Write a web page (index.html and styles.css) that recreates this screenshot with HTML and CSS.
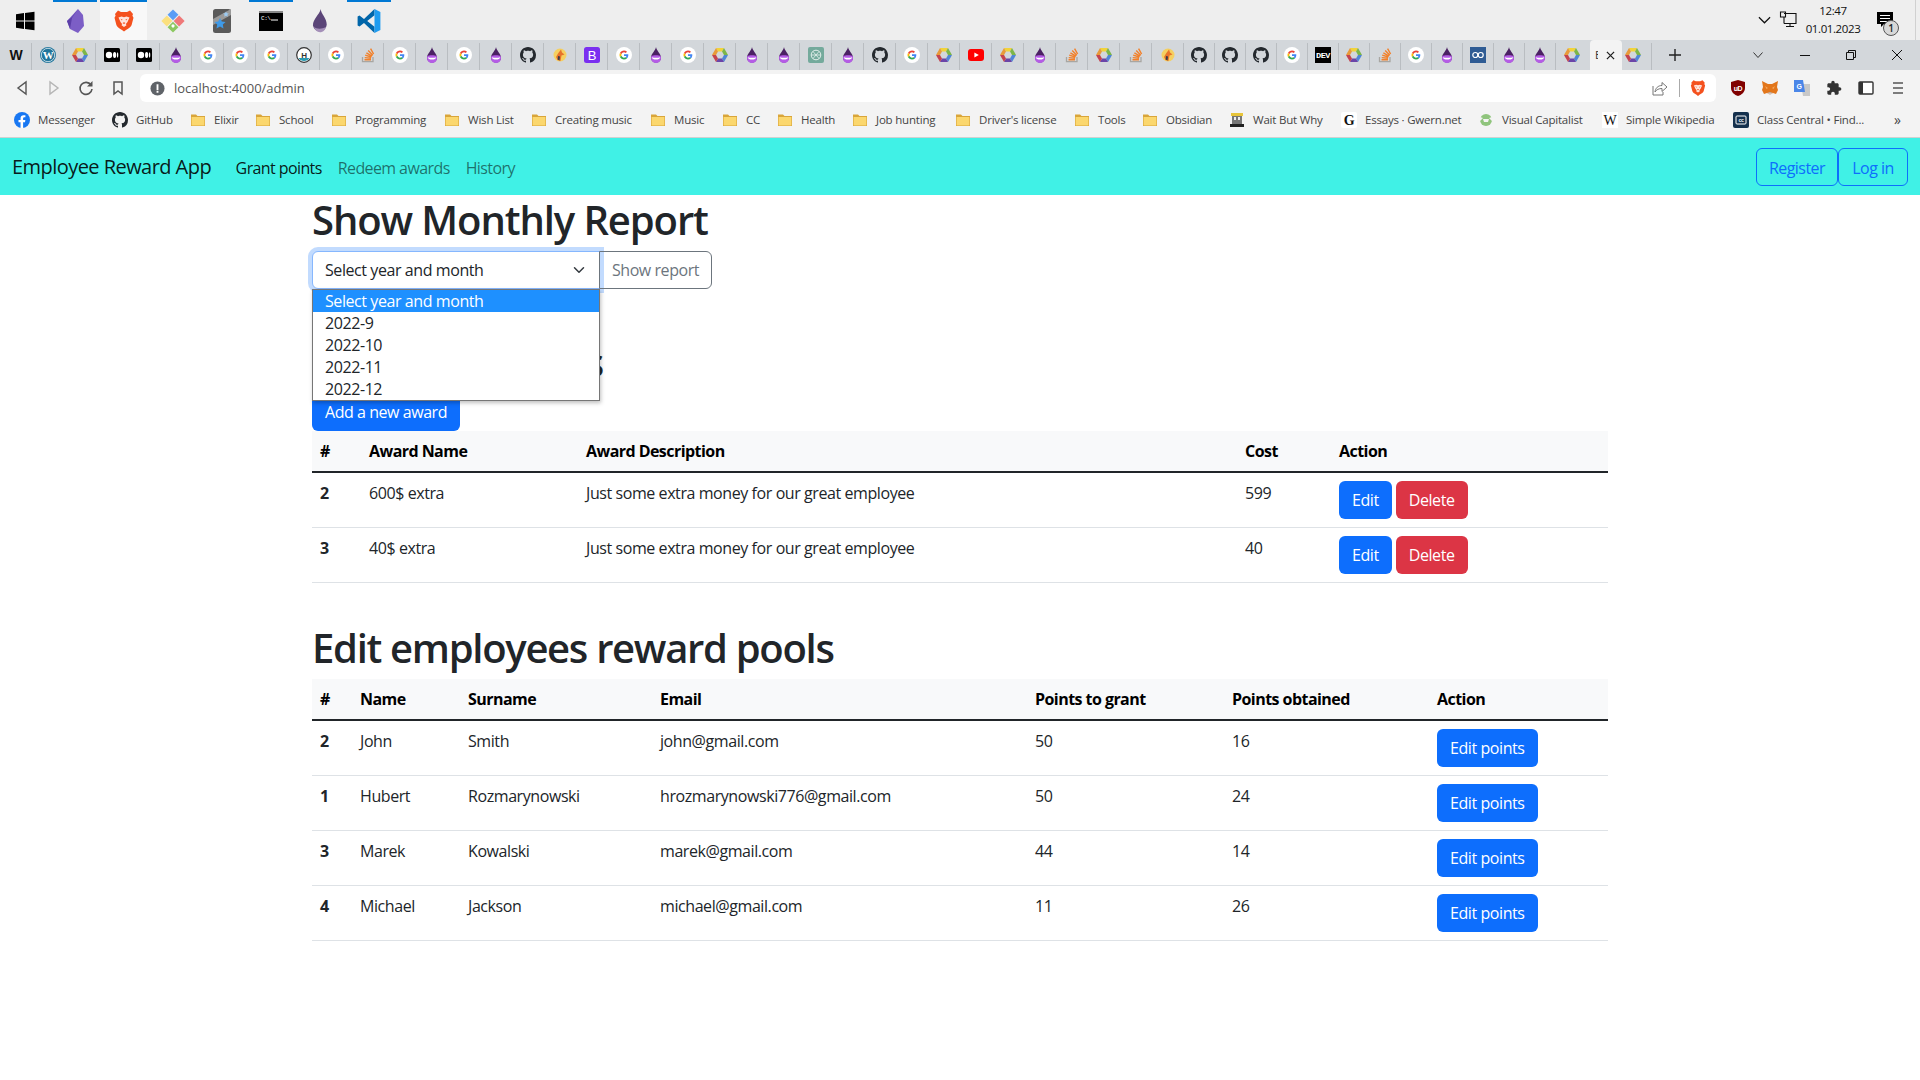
FILE: index.html
```html
<!DOCTYPE html>
<html lang="en">
<head>
  <meta charset="UTF-8">
  <title>Employee Reward App</title>
  <link rel="stylesheet" href="styles.css">
</head>
<body>
  <svg class="sprites" width="0" height="0">
    <symbol id="g" viewBox="0 0 64 64">
      <circle cx="32" cy="32" r="32" fill="#fff"/>
      <g transform="translate(14 14) scale(.75)">
        <path fill="#EA4335" d="M24 9.5c3.54 0 6.71 1.22 9.21 3.6l6.85-6.85C35.9 2.38 30.47 0 24 0 14.62 0 6.51 5.38 2.56 13.22l7.98 6.19C12.43 13.72 17.74 9.5 24 9.5z"/>
        <path fill="#4285F4" d="M46.98 24.55c0-1.57-.15-3.09-.38-4.55H24v9.02h12.94c-.58 2.96-2.26 5.48-4.78 7.18l7.73 6c4.51-4.18 7.09-10.36 7.09-17.65z"/>
        <path fill="#FBBC05" d="M10.53 28.59c-.48-1.45-.76-2.99-.76-4.59s.27-3.14.76-4.59l-7.98-6.19C.92 16.46 0 20.12 0 24c0 3.88.92 7.54 2.56 10.78l7.97-6.19z"/>
        <path fill="#34A853" d="M24 48c6.48 0 11.93-2.13 15.89-5.81l-7.73-6c-2.15 1.45-4.92 2.3-8.16 2.3-6.26 0-11.57-4.22-13.47-9.91l-7.98 6.19C6.51 42.62 14.62 48 24 48z"/>
      </g>
    </symbol>
    <symbol id="hex" viewBox="0 0 16 16">
      <polygon fill="#f2d33a" points="4,1.100 12,1.100 10,4.500 6,4.500"/>
      <polygon fill="#7cb648" points="12,1.100 16,8 12,8 10,4.500"/>
      <polygon fill="#4f86d6" points="16,8 12,14.900 10,11.500 12,8"/>
      <polygon fill="#6b45a8" points="12,14.900 4,14.900 6,11.500 10,11.500"/>
      <polygon fill="#c4434f" points="4,14.900 0,8 4,8 6,11.500"/>
      <polygon fill="#e89a3a" points="0,8 4,1.100 6,4.500 4,8"/>
    </symbol>
    <symbol id="drop" viewBox="0 0 16 16">
      <path fill="#4b2163" d="M8 0c.3 3.500 5 6.600 5 10.800A5 5 0 0 1 3 10.800C3 6.600 7.700 3.500 8 0z"/>
      <path fill="#b55ce6" d="M3.300 9.300a5 5 0 1 0 9.400 0C11 8 5 8 3.300 9.300z"/>
      <path fill="#fff" d="M3.800 10.200c2.400.8 6 .8 8.400 0-.2 1.700-1.900 2.400-4.200 2.400s-4-.7-4.200-2.400z"/>
    </symbol>
    <symbol id="medium" viewBox="0 0 16 16">
      <rect y="1" width="16" height="14" rx="1.500" fill="#000"/>
      <circle cx="5" cy="8" r="3.200" fill="#fff"/>
      <ellipse cx="10.600" cy="8" rx="1.600" ry="3" fill="#fff"/>
      <ellipse cx="13.600" cy="8" rx=".7" ry="2.800" fill="#fff"/>
    </symbol>
    <symbol id="github" viewBox="0 0 16 16">
      <path fill="#24292e" d="M8 0C3.580 0 0 3.580 0 8c0 3.540 2.290 6.530 5.470 7.590.4.07.55-.17.55-.38 0-.19-.01-.82-.01-1.490-2.010.37-2.530-.49-2.690-.94-.09-.23-.48-.94-.82-1.130-.28-.15-.68-.52-.01-.53.63-.01 1.080.58 1.230.82.72 1.210 1.870.87 2.330.66.07-.52.28-.87.51-1.070-1.780-.2-3.640-.89-3.640-3.950 0-.87.31-1.590.82-2.150-.08-.2-.36-1.020.08-2.120 0 0 .67-.21 2.200.82.64-.18 1.320-.27 2-.27.68 0 1.360.09 2 .27 1.530-1.040 2.200-.82 2.200-.82.44 1.100.16 1.920.08 2.120.51.56.82 1.270.82 2.150 0 3.070-1.870 3.750-3.650 3.950.29.25.54.73.54 1.480 0 1.070-.01 1.930-.01 2.200 0 .21.15.46.55.38A8.013 8.013 0 0 0 16 8c0-4.420-3.580-8-8-8z"/>
    </symbol>
    <symbol id="so" viewBox="0 0 16 16">
      <path fill="none" stroke="#a8a6a2" stroke-width="1.300" d="M2.500 10v4.600h10.500V10"/>
      <path fill="none" stroke="#f2802a" stroke-width="1.400" d="M4.500 12.800h6.500M4.700 10.600l6.300.7M5.200 8.200l6.200 1.800M6.400 5.800l5.600 3.300M8.200 3.600l4.600 4.600M10.600 1.600l3 5.400"/>
    </symbol>
    <symbol id="fox" viewBox="0 0 16 16">
      <circle cx="8" cy="8" r="6.500" fill="#f5d060"/>
      <path fill="#e8742a" d="M9 2.500l1 3 2.500 2-3 1-1 5.500-3-1-1.500-3 2-3.500z"/>
      <path fill="#3a3a48" d="M6 9l2 .5-.5 4-1.800-1z"/>
    </symbol>
    <symbol id="wp" viewBox="0 0 16 16">
      <circle cx="8" cy="8" r="8" fill="#21759b"/>
      <circle cx="8" cy="8" r="6.700" fill="none" stroke="#fff" stroke-width=".7"/>
      <text x="8" y="11.800" text-anchor="middle" font-family="Liberation Serif" font-weight="700" font-size="11" fill="#fff">W</text>
    </symbol>
    <symbol id="hdocs" viewBox="0 0 16 16">
      <circle cx="8" cy="8" r="7.300" fill="#fff" stroke="#333" stroke-width="1.200"/>
      <path fill="#2a9ab0" d="M2.500 11h11a6.500 6.500 0 0 1-11 0z"/>
      <text x="8" y="10.500" text-anchor="middle" font-family="Liberation Sans" font-weight="700" font-size="8" fill="#333">H</text>
    </symbol>
    <symbol id="boot" viewBox="0 0 16 16">
      <rect width="16" height="16" rx="2.500" fill="#7a2ff0"/>
      <text x="8" y="12.500" text-anchor="middle" font-family="Liberation Sans" font-size="13" fill="#fff">B</text>
    </symbol>
    <symbol id="gpt" viewBox="0 0 16 16">
      <rect width="16" height="16" rx="2" fill="#74aa9c"/>
      <circle cx="8" cy="8" r="4.800" fill="none" stroke="#e4f0ec" stroke-width="1"/>
      <path fill="none" stroke="#e4f0ec" stroke-width=".8" d="M5 4.500l6 7M11 4.500l-6 7M3.500 8h9"/>
    </symbol>
    <symbol id="yt" viewBox="0 0 16 16">
      <rect y="2" width="16" height="12" rx="3" fill="#f00"/>
      <path fill="#fff" d="M6.400 5.400L10.800 8l-4.400 2.600z"/>
    </symbol>
    <symbol id="dev" viewBox="0 0 16 16">
      <rect width="16" height="16" fill="#000"/>
      <text x="8" y="11" text-anchor="middle" font-family="Liberation Mono" font-weight="700" font-size="7.500" textLength="14" lengthAdjust="spacingAndGlyphs" fill="#fff">DEV</text>
    </symbol>
    <symbol id="co" viewBox="0 0 16 16">
      <rect width="16" height="16" fill="#2f5c94"/>
      <circle cx="5.300" cy="8" r="2.500" fill="none" stroke="#fff" stroke-width="1.200"/>
      <circle cx="10.700" cy="8" r="2.500" fill="none" stroke="#fff" stroke-width="1.200"/>
    </symbol>
    <symbol id="wmark" viewBox="0 0 16 16">
      <text x="8" y="12.500" text-anchor="middle" font-family="Liberation Sans" font-weight="700" font-size="14" fill="#111">W</text>
    </symbol>
    <symbol id="folder" viewBox="0 0 16 16">
      <path fill="#d9a53a" d="M1 2.500h5l1.500 1.500H15v10H1z"/>
      <path fill="#fbd76e" d="M1.600 5h12.800v8.500H1.600z"/>
    </symbol>
    <symbol id="fb" viewBox="0 0 16 16">
      <circle cx="8" cy="8" r="8" fill="#1877f2"/>
      <path fill="#fff" d="M11 10.300l.35-2.300H9.100V6.500c0-.63.31-1.250 1.300-1.250h1V3.300S10.500 3.150 9.600 3.150C7.750 3.150 6.550 4.270 6.550 6.300V8H4.500v2.300h2.050V16h2.550v-5.700z"/>
    </symbol>
    <symbol id="brave" viewBox="0 0 24 24">
      <path fill="#f4511e" d="M6 1.500L9 3h6l3-1.500 3 3.500-.6 1.700 1.100 2L19.600 16c-.5 2-2.600 3-5.600 5l-2 1.500L10 21c-3-2-5.100-3-5.600-5L2.500 8.700l1.100-2L3 5z"/>
      <path fill="#fff" d="M6.500 8.500L9.500 7.600l2.500.7 2.500-.7 3 .9-2 4.500-1.600 2 .6 1.200-2.500 1.800-2.500-1.800.6-1.200-1.600-2z" opacity=".85"/>
      <path fill="#f4511e" d="M8.500 9.800l2 .8-.6 1zM15.500 9.800l-2 .8.6 1zM10.500 14l1.500-.8 1.500.8-1.500.9z"/>
    </symbol>
    <symbol id="tray-net" viewBox="0 0 18 18">
      <path fill="none" stroke="#111" stroke-width="1.100" d="M5 2.500h12v10H5M1.500 1h5v5h-5zM5 6v6.500M11 12.500v3M7 15.500h8"/>
    </symbol>
  </svg>

  <div class="taskbar">
    <div class="task-item task-start">
      <svg class="task-icon" viewBox="0 0 24 24"><path fill="#000" d="M3 5.200l8-1.100v7.400H3zM12 4l9.500-1.300v8.800H12zM3 12.500h8v7.400l-8-1.100zM12 12.500h9.500v8.800L12 20z"/></svg>
    </div>
    <div class="task-item task-open">
      <svg class="task-icon" viewBox="0 0 24 24"><path fill="#7c5ec6" d="M15 0l5 6 1 11-6 7-8-4-3-8z"/><path fill="#5c3fa8" d="M15 0L9 8l-5 4 3 8 2-11z"/></svg>
    </div>
    <div class="task-item task-active">
      <svg class="task-icon"><use href="#brave"/></svg>
    </div>
    <div class="task-item">
      <svg class="task-icon" viewBox="0 0 24 24">
        <g transform="rotate(45 12 12)">
          <rect x="3.800" y="3.800" width="7.700" height="7.700" fill="#5a9cf5"/>
          <rect x="12.500" y="3.800" width="7.700" height="7.700" fill="#ef7878"/>
          <rect x="12.500" y="12.500" width="7.700" height="7.700" fill="#8cc860"/>
          <rect x="3.800" y="12.500" width="7.700" height="7.700" fill="#fbe07e"/>
          <circle cx="15.500" cy="15.500" r="1.600" fill="#fff"/>
        </g>
      </svg>
    </div>
    <div class="task-item">
      <svg class="task-icon" viewBox="0 0 24 24">
        <rect x="3" y="0" width="18" height="24" rx="2.500" fill="#5a5a5a"/>
        <path fill="#9a9a9a" d="M3 10L21 0v6L3 16z"/>
        <path fill="#3f9ae8" d="M10 9l1.800 3.500 3.800.5-2.800 2.600.7 3.800L10 17.600l-3.500 1.800.7-3.800L4.400 13l3.800-.5z"/>
        <path fill="#9ccbf2" d="M16 2.500l.9 1.700 1.900.3-1.400 1.300.3 1.900-1.700-.9-1.700.9.3-1.900-1.400-1.300 1.900-.3z"/>
      </svg>
    </div>
    <div class="task-item task-open">
      <svg class="task-icon" viewBox="0 0 24 24">
        <rect y="2" width="24" height="20" fill="#000"/>
        <rect y="2" width="24" height="2" fill="#888"/>
        <text x="2" y="11" font-family="Liberation Mono" font-size="6" fill="#fff">C:\</text>
        <path stroke="#fff" d="M12 11h7"/>
      </svg>
    </div>
    <div class="task-item">
      <svg class="task-icon" viewBox="0 0 16 16"><path fill="#5b4578" d="M8.500 0c0 3 4 6 4 10.500A4.700 5 0 0 1 3.300 11C3.300 6.500 7.500 4 8.500 0z"/><path fill="#a48fb8" d="M4 12c2 1.500 5 1.500 8 0-.5 2-2 3.500-4 3.500S4.500 14 4 12z"/></svg>
    </div>
    <div class="task-item task-open">
      <svg class="task-icon" viewBox="0 0 24 24">
        <path fill="#0065a9" d="M17.500 0L7 10 2.500 6.500.6 7.600v8.800l1.900 1.100L7 14l10.500 10v-6.200L10.200 12l7.300-5.800z"/>
        <path fill="#1f9cf0" d="M17.500 0L23.400 2.900v18.200L17.500 24z"/>
      </svg>
    </div>
    <div class="tray">
      <svg class="tray-chevron" viewBox="0 0 14 8"><path fill="none" stroke="#111" stroke-width="1.300" d="M1 1l6 6 6-6"/></svg>
      <svg class="tray-net"><use href="#tray-net"/></svg>
      <div class="clock"><span>12:47</span><span>01.01.2023</span></div>
      <div class="notify">
        <svg class="notify-icon" viewBox="0 0 16 16"><path fill="#000" d="M0 0h16v12H7l-3 3v-3H0z"/><path stroke="#fff" d="M3 3.500h10M3 6.500h10M3 9.500h7"/></svg>
        <span class="notify-badge">1</span>
      </div>
    </div>
  </div>

  <div class="tabstrip">
    <span class="tab"><svg class="fav"><use href="#wmark"/></svg></span>
    <span class="tab"><svg class="fav"><use href="#wp"/></svg></span>
    <span class="tab"><svg class="fav"><use href="#hex"/></svg></span>
    <span class="tab"><svg class="fav"><use href="#medium"/></svg></span>
    <span class="tab"><svg class="fav"><use href="#medium"/></svg></span>
    <span class="tab"><svg class="fav"><use href="#drop"/></svg></span>
    <span class="tab"><svg class="fav"><use href="#g"/></svg></span>
    <span class="tab"><svg class="fav"><use href="#g"/></svg></span>
    <span class="tab"><svg class="fav"><use href="#g"/></svg></span>
    <span class="tab"><svg class="fav"><use href="#hdocs"/></svg></span>
    <span class="tab"><svg class="fav"><use href="#g"/></svg></span>
    <span class="tab"><svg class="fav"><use href="#so"/></svg></span>
    <span class="tab"><svg class="fav"><use href="#g"/></svg></span>
    <span class="tab"><svg class="fav"><use href="#drop"/></svg></span>
    <span class="tab"><svg class="fav"><use href="#g"/></svg></span>
    <span class="tab"><svg class="fav"><use href="#drop"/></svg></span>
    <span class="tab"><svg class="fav"><use href="#github"/></svg></span>
    <span class="tab"><svg class="fav"><use href="#fox"/></svg></span>
    <span class="tab"><svg class="fav"><use href="#boot"/></svg></span>
    <span class="tab"><svg class="fav"><use href="#g"/></svg></span>
    <span class="tab"><svg class="fav"><use href="#drop"/></svg></span>
    <span class="tab"><svg class="fav"><use href="#g"/></svg></span>
    <span class="tab"><svg class="fav"><use href="#hex"/></svg></span>
    <span class="tab"><svg class="fav"><use href="#drop"/></svg></span>
    <span class="tab"><svg class="fav"><use href="#drop"/></svg></span>
    <span class="tab"><svg class="fav"><use href="#gpt"/></svg></span>
    <span class="tab"><svg class="fav"><use href="#drop"/></svg></span>
    <span class="tab"><svg class="fav"><use href="#github"/></svg></span>
    <span class="tab"><svg class="fav"><use href="#g"/></svg></span>
    <span class="tab"><svg class="fav"><use href="#hex"/></svg></span>
    <span class="tab"><svg class="fav"><use href="#yt"/></svg></span>
    <span class="tab"><svg class="fav"><use href="#hex"/></svg></span>
    <span class="tab"><svg class="fav"><use href="#drop"/></svg></span>
    <span class="tab"><svg class="fav"><use href="#so"/></svg></span>
    <span class="tab"><svg class="fav"><use href="#hex"/></svg></span>
    <span class="tab"><svg class="fav"><use href="#so"/></svg></span>
    <span class="tab"><svg class="fav"><use href="#fox"/></svg></span>
    <span class="tab tab-narrow"><svg class="fav"><use href="#github"/></svg></span>
    <span class="tab tab-narrow"><svg class="fav"><use href="#github"/></svg></span>
    <span class="tab tab-narrow"><svg class="fav"><use href="#github"/></svg></span>
    <span class="tab tab-narrow"><svg class="fav"><use href="#g"/></svg></span>
    <span class="tab tab-narrow"><svg class="fav"><use href="#dev"/></svg></span>
    <span class="tab tab-narrow"><svg class="fav"><use href="#hex"/></svg></span>
    <span class="tab tab-narrow"><svg class="fav"><use href="#so"/></svg></span>
    <span class="tab tab-narrow"><svg class="fav"><use href="#g"/></svg></span>
    <span class="tab tab-narrow"><svg class="fav"><use href="#drop"/></svg></span>
    <span class="tab tab-narrow"><svg class="fav"><use href="#co"/></svg></span>
    <span class="tab tab-narrow"><svg class="fav"><use href="#drop"/></svg></span>
    <span class="tab tab-narrow"><svg class="fav"><use href="#drop"/></svg></span>
    <span class="tab tab-narrow tab-before-active"><svg class="fav"><use href="#hex"/></svg></span>
    <span class="tab-current">
      <span class="tab-letter">E</span>
      <svg class="tab-close" viewBox="0 0 10 10"><path stroke="#222" stroke-width="1.400" d="M1 1l8 8M9 1l-8 8"/></svg>
    </span>
    <span class="tab tab-last"><svg class="fav"><use href="#hex"/></svg></span>
    <svg class="tab-new" viewBox="0 0 12 12"><path stroke="#222" stroke-width="1.400" d="M6 0v12M0 6h12"/></svg>
    <div class="window-controls">
      <svg class="win-chevron" viewBox="0 0 10 6"><path fill="none" stroke="#333" d="M.5.500L5 5.500 9.500.500"/></svg>
      <svg class="win-btn" viewBox="0 0 10 10"><path stroke="#111" d="M0 5.500h10"/></svg>
      <svg class="win-btn" viewBox="0 0 10 10"><path fill="none" stroke="#111" d="M.5 2.500h7v7h-7zM2.500 2.500v-2h7v7h-2"/></svg>
      <svg class="win-btn" viewBox="0 0 10 10"><path stroke="#111" d="M0 0l10 10M10 0L0 10"/></svg>
    </div>
  </div>

  <div class="toolbar">
    <div class="nav-icons">
      <svg class="tool-icon" viewBox="0 0 16 16"><path fill="none" stroke="#555" stroke-width="1.400" d="M12 2v12L4 8z"/></svg>
      <svg class="tool-icon" viewBox="0 0 16 16"><path fill="none" stroke="#b5b5b5" stroke-width="1.400" d="M4 2v12l8-6z"/></svg>
      <svg class="tool-icon" viewBox="0 0 16 16"><path fill="none" stroke="#555" stroke-width="1.600" d="M13 5a6 6 0 1 0 1 4"/><path fill="#555" d="M14.500 1v5.500H9z"/></svg>
      <svg class="tool-icon" viewBox="0 0 16 16"><path fill="none" stroke="#555" stroke-width="1.500" d="M4 2h8v12l-4-3-4 3z"/></svg>
    </div>
    <div class="address">
      <svg class="info-icon" viewBox="0 0 16 16"><circle cx="8" cy="8" r="7.500" fill="#5f6368"/><path fill="#fff" d="M7 3.500h2v6H7zM7 10.500h2v2H7z"/></svg>
      <span class="url">localhost:4000/admin</span>
      <svg class="share-icon" viewBox="0 0 16 16"><path fill="none" stroke="#777" d="M1 6v9h10v-3M3 12c.5-4 3-6.500 7-6.500V2.500l5 4.500-5 4.500V8.500c-3 0-5.500 1-7 3.500z"/></svg>
      <span class="address-sep"></span>
      <svg class="brave-icon"><use href="#brave"/></svg>
    </div>
    <div class="extensions">
      <svg class="ext-icon" viewBox="0 0 16 16"><path fill="#800000" d="M8 0l7 2v6c0 4-3.500 7-7 8-3.500-1-7-4-7-8V2z"/><text x="8" y="10.500" text-anchor="middle" font-family="Liberation Sans" font-weight="700" font-size="7" fill="#fff">uD</text></svg>
      <svg class="ext-icon" viewBox="0 0 16 16"><path fill="#e2761b" d="M0 1l6 3h4l6-3-1 6 1 3-2 4-3-1-3 1-3-1-3 1-2-4 1-3z"/><path fill="#f6a65a" d="M3 6l3 2-1.500 1zM13 6l-3 2 1.500 1z"/><path fill="#3b2314" d="M6.500 12h3L8 14z"/><path fill="#d7c1b3" d="M5 13l3 2 3-2-3-1z"/></svg>
      <svg class="ext-icon" viewBox="0 0 16 16"><path fill="#c8c8c8" d="M7 4h9v12H9z"/><path fill="#4a86e8" d="M0 0h9l2 12H0z"/><text x="5" y="9" text-anchor="middle" font-family="Liberation Sans" font-weight="700" font-size="7" fill="#fff">G</text></svg>
      <svg class="ext-icon" viewBox="0 0 24 24"><path fill="#333" d="M20.500 11H19V7c0-1.100-.9-2-2-2h-4V3.500C13 2.120 11.880 1 10.500 1S8 2.120 8 3.500V5H4c-1.100 0-1.990.9-1.990 2v3.800H3.500c1.490 0 2.700 1.210 2.700 2.700s-1.210 2.700-2.700 2.700H2V20c0 1.100.9 2 2 2h3.800v-1.500c0-1.490 1.210-2.700 2.700-2.700 1.490 0 2.700 1.210 2.700 2.700V22H17c1.100 0 2-.9 2-2v-4h1.500c1.380 0 2.500-1.120 2.500-2.500S21.880 11 20.500 11z"/></svg>
      <svg class="ext-icon" viewBox="0 0 16 16"><rect x="1" y="2" width="14" height="12" rx="1" fill="#fff" stroke="#333" stroke-width="1.400"/><rect x="1" y="2" width="4" height="12" fill="#333"/></svg>
      <svg class="ext-icon" viewBox="0 0 16 16"><path stroke="#555" stroke-width="1.600" d="M3 3h10M3 8h10M3 13h10"/></svg>
    </div>
  </div>

  <div class="bookmarks">
    <a class="bookmark"><svg class="fav"><use href="#fb"/></svg>Messenger</a>
    <a class="bookmark"><svg class="fav"><use href="#github"/></svg>GitHub</a>
    <a class="bookmark"><svg class="fav"><use href="#folder"/></svg>Elixir</a>
    <a class="bookmark"><svg class="fav"><use href="#folder"/></svg>School</a>
    <a class="bookmark"><svg class="fav"><use href="#folder"/></svg>Programming</a>
    <a class="bookmark"><svg class="fav"><use href="#folder"/></svg>Wish List</a>
    <a class="bookmark"><svg class="fav"><use href="#folder"/></svg>Creating music</a>
    <a class="bookmark"><svg class="fav"><use href="#folder"/></svg>Music</a>
    <a class="bookmark"><svg class="fav"><use href="#folder"/></svg>CC</a>
    <a class="bookmark"><svg class="fav"><use href="#folder"/></svg>Health</a>
    <a class="bookmark"><svg class="fav"><use href="#folder"/></svg>Job hunting</a>
    <a class="bookmark"><svg class="fav"><use href="#folder"/></svg>Driver's license</a>
    <a class="bookmark"><svg class="fav"><use href="#folder"/></svg>Tools</a>
    <a class="bookmark"><svg class="fav"><use href="#folder"/></svg>Obsidian</a>
    <a class="bookmark"><svg class="fav" viewBox="0 0 16 16"><rect x="2" y="1" width="12" height="3" fill="#e8c53a"/><rect x="3" y="4" width="10" height="8" fill="#777"/><path fill="#eee" d="M5 5h2v3H5zM9 5h2v3H9z"/><rect x="1" y="12" width="14" height="3" fill="#222"/></svg>Wait But Why</a>
    <a class="bookmark"><svg class="fav" viewBox="0 0 16 16"><rect width="16" height="16" rx="2" fill="#fff"/><text x="8" y="13" text-anchor="middle" font-family="Liberation Serif" font-weight="700" font-size="14" fill="#111">G</text></svg>Essays · Gwern.net</a>
    <a class="bookmark"><svg class="fav" viewBox="0 0 16 16"><circle cx="8" cy="8" r="6" fill="#8fc47c"/><path fill="#f3f3f3" d="M5 7h6l-1 3H6zM2 5l3 1-3 3zM14 5l-3 1 3 3z"/></svg>Visual Capitalist</a>
    <a class="bookmark"><svg class="fav" viewBox="0 0 16 16"><rect width="16" height="16" fill="#fff"/><text x="8" y="13" text-anchor="middle" font-family="Liberation Serif" font-size="14" fill="#111">W</text></svg>Simple Wikipedia</a>
    <a class="bookmark"><svg class="fav" viewBox="0 0 16 16"><rect width="16" height="16" rx="2" fill="#14304d"/><rect x="3" y="4" width="10" height="8" rx="1" fill="none" stroke="#fff"/><text x="8" y="10" text-anchor="middle" font-family="Liberation Sans" font-weight="700" font-size="5" fill="#fff">cc</text></svg>Class Central • Find...</a>
    <span class="bookmark-more">»</span>
  </div>

  <nav class="navbar">
    <a class="brand">Employee Reward App</a>
    <ul class="nav-links">
      <li class="nav-link active">Grant points</li>
      <li class="nav-link">Redeem awards</li>
      <li class="nav-link">History</li>
    </ul>
    <div class="auth">
      <a class="btn btn-outline">Register</a>
      <a class="btn btn-outline">Log in</a>
    </div>
  </nav>

  <main class="container">
    <h1>Show Monthly Report</h1>
    <div class="report-form">
      <div class="select-wrap">
        <div class="select">
          <span>Select year and month</span>
          <svg class="select-arrow" viewBox="0 0 16 16"><path fill="none" stroke="#343a40" stroke-width="2" stroke-linecap="round" stroke-linejoin="round" d="M2 5l6 6 6-6"/></svg>
        </div>
        <ul class="select-list">
          <li class="selected">Select year and month</li>
          <li>2022-9</li>
          <li>2022-10</li>
          <li>2022-11</li>
          <li>2022-12</li>
        </ul>
      </div>
      <button class="btn btn-grey">Show report</button>
    </div>

    <section class="awards">
      <h1>Manage awards</h1>
      <a class="btn btn-primary btn-add">Add a new award</a>
      <table class="table">
        <colgroup><col class="a1"><col class="a2"><col class="a3"><col class="a4"><col class="a5"></colgroup>
        <thead>
          <tr><th>#</th><th>Award Name</th><th>Award Description</th><th>Cost</th><th>Action</th></tr>
        </thead>
        <tbody>
          <tr>
            <th>2</th><td>600$ extra</td><td>Just some extra money for our great employee</td><td>599</td>
            <td class="actions"><a class="btn btn-primary">Edit</a><a class="btn btn-danger">Delete</a></td>
          </tr>
          <tr>
            <th>3</th><td>40$ extra</td><td>Just some extra money for our great employee</td><td>40</td>
            <td class="actions"><a class="btn btn-primary">Edit</a><a class="btn btn-danger">Delete</a></td>
          </tr>
        </tbody>
      </table>
    </section>

    <section class="pools">
      <h1>Edit employees reward pools</h1>
      <table class="table">
        <colgroup><col class="p1"><col class="p2"><col class="p3"><col class="p4"><col class="p5"><col class="p6"><col class="p7"></colgroup>
        <thead>
          <tr><th>#</th><th>Name</th><th>Surname</th><th>Email</th><th>Points to grant</th><th>Points obtained</th><th>Action</th></tr>
        </thead>
        <tbody>
          <tr><th>2</th><td>John</td><td>Smith</td><td>john@gmail.com</td><td>50</td><td>16</td><td class="actions"><a class="btn btn-primary">Edit points</a></td></tr>
          <tr><th>1</th><td>Hubert</td><td>Rozmarynowski</td><td>hrozmarynowski776@gmail.com</td><td>50</td><td>24</td><td class="actions"><a class="btn btn-primary">Edit points</a></td></tr>
          <tr><th>3</th><td>Marek</td><td>Kowalski</td><td>marek@gmail.com</td><td>44</td><td>14</td><td class="actions"><a class="btn btn-primary">Edit points</a></td></tr>
          <tr><th>4</th><td>Michael</td><td>Jackson</td><td>michael@gmail.com</td><td>11</td><td>26</td><td class="actions"><a class="btn btn-primary">Edit points</a></td></tr>
        </tbody>
      </table>
    </section>
  </main>
</body>
</html>
```

FILE: styles.css
```css
* {
    box-sizing: border-box;
}
body {
    margin: 0;
    font-family: "Open Sans", sans-serif;
    font-size: 16px;
    line-height: 24px;
    letter-spacing: -0.42px;
    color: #212529;
    background: #fff;
    overflow: hidden;
}
.sprites {
    position: absolute;
}
ul {
    list-style: none;
    margin: 0;
    padding: 0;
}

/* windows taskbar */
.taskbar {
    display: flex;
    align-items: stretch;
    height: 40px;
    background: #eeeeee;
}
.task-item {
    display: flex;
    align-items: center;
    justify-content: center;
    width: 49px;
    padding-left: 2px;
    border-top: 2px solid transparent;
}
.task-start {
    padding-left: 0;
}
.task-open {
    border-image: linear-gradient(to right, transparent 6px, #0078d4 6px, #0078d4 calc(100% - 3px), transparent calc(100% - 3px)) 2;
    border-top: 2px solid;
    border-bottom: 0;
    border-left: 0;
    border-right: 0;
}
.task-active {
    width: 47px;
    margin-left: 2px;
    padding-left: 0;
    border-top: 2px solid #0078d4;
    background: #f8f8f8;
}
.task-icon {
    width: 24px;
    height: 24px;
}
.tray {
    display: flex;
    align-items: center;
    margin-left: auto;
    width: 161px;
    border-right: 1px solid #d0d0d0;
    margin-right: 4px;
}
.tray-chevron {
    width: 13px;
    height: 8px;
    margin-left: 3px;
}
.tray-net {
    width: 18px;
    height: 18px;
    margin-left: 8px;
}
.clock {
    display: flex;
    flex-direction: column;
    align-items: center;
    width: 58px;
    margin-left: 7px;
    font-size: 11.500px;
    line-height: 18px;
    letter-spacing: -0.4px;
    color: #111;
}
.notify {
    position: relative;
    width: 17px;
    height: 17px;
    margin-left: 15px;
}
.notify-icon {
    width: 16px;
    height: 16px;
    display: block;
}
.notify-badge {
    position: absolute;
    left: 6px;
    top: 8px;
    width: 16px;
    height: 16px;
    border-radius: 50%;
    background: #d8d8d8;
    border: 1px solid #555;
    font-size: 10px;
    line-height: 14px;
    text-align: center;
    font-weight: 600;
}

/* tabs */
.tabstrip {
    display: flex;
    align-items: stretch;
    height: 30px;
    background: #d3d7db;
}
.tab {
    display: flex;
    align-items: center;
    justify-content: center;
    width: 32px;
    flex: none;
    border-right: 1px solid #b9bdc1;
    margin: 3px 0 0;
    padding-bottom: 3px;
}
.tab-narrow {
    width: 31px;
}
.tab-before-active {
    border-right: 0;
}
.tab-last {
    width: 30px;
    padding-right: 8px;
}
.fav {
    width: 16px;
    height: 16px;
    flex: none;
}
.tab-current {
    display: flex;
    align-items: center;
    width: 32px;
    flex: none;
    margin-left: 3px;
    padding-left: 5px;
    background: #f3f3f3;
    border-radius: 4px 4px 0 0;
    overflow: hidden;
    font-size: 11px;
}
.tab-letter {
    width: 3px;
    overflow: hidden;
    color: #333;
}
.tab-close {
    width: 9px;
    height: 9px;
    margin-left: 8px;
}
.tab-new {
    width: 12px;
    height: 12px;
    align-self: center;
    margin-left: 17px;
}
.window-controls {
    display: flex;
    align-items: center;
    margin-left: auto;
    padding-right: 18px;
}
.win-chevron {
    width: 10px;
    height: 6px;
    margin-right: 1px;
}
.win-btn {
    width: 10px;
    height: 10px;
    margin-left: 36px;
}

/* browser toolbar */
.toolbar {
    display: flex;
    align-items: center;
    height: 32px;
    background: #f3f3f3;
    padding-top: 4px;
}
.nav-icons {
    display: flex;
    gap: 16px;
    width: 140px;
    padding-left: 14px;
}
.tool-icon {
    width: 16px;
    height: 16px;
}
.address {
    display: flex;
    align-items: center;
    width: 1576px;
    height: 28px;
    background: #fff;
    border-radius: 6px;
    padding: 0 9px 0 10px;
}
.info-icon {
    width: 15px;
    height: 15px;
    margin-right: 9px;
}
.url {
    font-size: 13px;
    color: #555;
    letter-spacing: 0;
}
.share-icon {
    width: 16px;
    height: 16px;
    margin-left: auto;
}
.address-sep {
    width: 1px;
    height: 18px;
    background: #aaa;
    margin: 0 9px 0 11px;
}
.brave-icon {
    width: 18px;
    height: 20px;
}
.extensions {
    display: flex;
    align-items: center;
    gap: 16px;
    padding-left: 14px;
}
.ext-icon {
    width: 16px;
    height: 16px;
}

/* bookmarks bar */
.bookmarks {
    display: grid;
    grid-template-columns: 98px 78px 65px 76px 113px 87px 119px 72px 55px 75px 103px 119px 68px 87px 112px 137px 124px 131px 155px auto;
    align-items: center;
    height: 36px;
    padding-left: 14px;
    background: #f3f3f3;
    border-bottom: 1px solid #d0d0d0;
    font-size: 11.500px;
    letter-spacing: -0.2px;
    color: #444;
}
.bookmark {
    display: flex;
    align-items: center;
    gap: 8px;
    white-space: nowrap;
}
.bookmark-more {
    font-size: 14px;
    margin-left: 6px;
}

/* app navbar */
.navbar {
    display: flex;
    align-items: center;
    height: 57px;
    padding: 0 12px;
    background: #40f1e6;
}
.brand {
    padding-top: 1px;
    font-size: 20px;
    letter-spacing: -0.55px;
    color: rgba(0, 0, 0, .9);
}
.nav-links {
    display: flex;
    margin-left: 16.500px;
    letter-spacing: -0.6px;
}
.nav-link {
    padding: 9px 8px 7px;
    color: rgba(0, 0, 0, .55);
}
.nav-link.active {
    color: rgba(0, 0, 0, .9);
}
.auth {
    display: flex;
    margin-left: auto;
}
.auth .btn {
    min-width: 70px;
    padding: 7px 12px 5px;
    text-align: center;
    letter-spacing: -0.55px;
}

/* buttons */
.btn {
    display: inline-block;
    padding: 6px 12px;
    font: inherit;
    letter-spacing: inherit;
    line-height: 24px;
    border: 1px solid transparent;
    border-radius: 6px;
    background: none;
    white-space: nowrap;
}
.btn-outline {
    border-color: #0d6efd;
    color: #0d6efd;
}
.btn-primary {
    background: #0d6efd;
    color: #fff;
}
.btn-danger {
    background: #dc3545;
    color: #fff;
    margin-left: 4px;
}
.btn-grey {
    position: relative;
    z-index: 3;
    border-color: #6c757d;
    color: #6c757d;
    border-radius: 0 6px 6px 0;
    margin-left: -1px;
    letter-spacing: -0.45px;
}
.btn-add {
    letter-spacing: -0.45px;
    vertical-align: top;
}

/* page */
.container {
    width: 1296px;
    margin: 0 auto;
}
h1 {
    margin: 0 0 7px;
    padding-top: 1px;
    font-size: 40px;
    line-height: 48px;
    font-weight: 600;
    letter-spacing: -1.1px;
}
.report-form {
    display: flex;
    align-items: flex-start;
    height: 86px;
}
.select-wrap {
    position: relative;
    width: 288px;
    z-index: 2;
}
.select {
    display: flex;
    align-items: center;
    justify-content: space-between;
    height: 38px;
    padding: 0 12px;
    background: #fff;
    border: 1px solid #86b7fe;
    border-radius: 6px 0 0 6px;
    box-shadow: 0 0 0 4px rgba(13, 110, 253, .25);
}
.select-arrow {
    width: 16px;
    height: 12px;
}
.select-list {
    position: absolute;
    left: 0;
    top: 38px;
    width: 288px;
    background: #fff;
    border: 1px solid #767676;
    box-shadow: 1px 2px 4px rgba(0, 0, 0, .25);
}
.select-list li {
    height: 22px;
    line-height: 22px;
    padding-left: 12px;
}
.select-list .selected {
    background: #1e90ff;
    color: #fff;
}
.awards h1 {
    letter-spacing: -1.05px;
}
.table {
    width: 100%;
    border-collapse: collapse;
    table-layout: fixed;
}
.pools {
    margin-top: 40px;
}
.pools h1 {
    letter-spacing: -1.3px;
}
.table thead {
    background: #f8f9fa;
    color: #000;
}
.table thead th {
    height: 41px;
    border-bottom: 2px solid #212529;
    letter-spacing: -0.55px;
}
.table th,
.table td {
    padding: 8px;
    text-align: left;
    vertical-align: top;
}
.table tbody tr {
    border-bottom: 1px solid #dee2e6;
}
.table tbody th {
    font-weight: 700;
}
.a1 { width: 49px; }
.a2 { width: 217px; }
.a3 { width: 659px; }
.a4 { width: 94px; }
.p1 { width: 40px; }
.p2 { width: 108px; }
.p3 { width: 192px; }
.p4 { width: 375px; }
.p5 { width: 197px; }
.p6 { width: 205px; }
```
